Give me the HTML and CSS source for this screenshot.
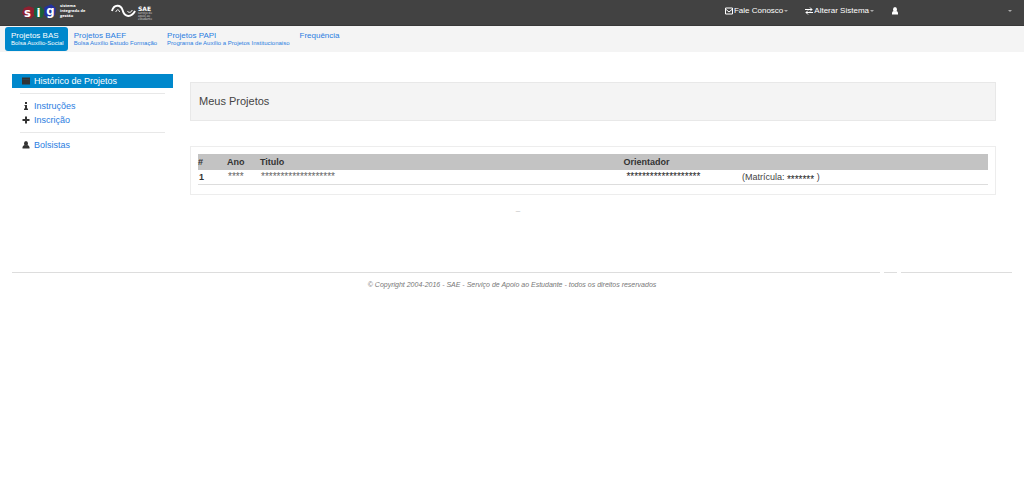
FILE: index.html
```
<!DOCTYPE html>
<html lang="pt-BR">
<head>
<meta charset="utf-8">
<meta name="viewport" content="width=device-width, initial-scale=1">
<title>SAE - Meus Projetos</title>
<link rel="stylesheet" href="styles.css">
</head>
<body>
<header class="topbar">
  <a class="brand" href="#">
    <svg class="sig-logo" viewBox="0 0 36 18" aria-label="sig" role="img">
      <path d="M2 5 7 3 12 5 13 12 9 16 3 14 0 10Z" fill="#8f2030"/>
      <path d="M13 5 19 3 23 8 21 15 15 15 12 11Z" fill="#17613a"/>
      <path d="M23 4 30 1 35 5 34 12 28 16 23 12Z" fill="#2432a0"/>
      <text class="sig-letter" x="2" y="14">s</text>
      <text class="sig-letter" x="15" y="14">i</text>
      <text class="sig-letter" x="25" y="12">g</text>
    </svg>
    <span class="brand-text">sistema<br>integrado de<br>gestão</span>
  </a>
  <a class="sae" href="#">
    <svg class="sae-logo" viewBox="0 0 27 14" fill="none" stroke="#fff" aria-hidden="true">
      <path d="M1 7C3 0 10 0 12 6 14 14 21 14 25 7" stroke-width="2"/>
      <path d="M5 8C6 5 8 5 9 8M17 7C18 9 21 9 22 6" stroke-width="1"/>
    </svg>
    <span class="sae-text"><b>SAE</b><small>serviço de<br>apoio ao<br>estudante</small></span>
  </a>
  <nav class="top-links" aria-label="Sistema">
    <button class="top-link" type="button">
      <svg class="icon" viewBox="0 0 16 16" fill="none" stroke="currentColor" stroke-width="2" aria-hidden="true"><path d="M1 2H15V14H1ZM1 4 8 10 15 4"/></svg>Fale Conosco<i class="caret"></i>
    </button>
    <button class="top-link" type="button">
      <svg class="icon" viewBox="0 0 16 16" fill="none" stroke="currentColor" stroke-width="2" aria-hidden="true"><path d="M0 5H14M10 1 14 5 10 9M16 11H2M6 7 2 11 6 15"/></svg>Alterar Sistema<i class="caret"></i>
    </button>
    <button class="top-link user" type="button" aria-label="Usuário">
      <svg class="icon" viewBox="0 0 16 16" fill="currentColor" aria-hidden="true"><ellipse cx="8" cy="5" rx="4" ry="5"/><path d="M2 15V12Q2 9 5 8Q8 11 11 8Q14 9 14 12V15Z"/></svg><i class="caret"></i>
    </button>
  </nav>
</header>
<nav class="tabs" aria-label="Projetos">
  <a class="tab active" href="#">Projetos BAS<small>Bolsa Auxílio-Social</small></a>
  <a class="tab" href="#">Projetos BAEF<small>Bolsa Auxílio Estudo Formação</small></a>
  <a class="tab" href="#">Projetos PAPI<small>Programa de Auxílio a Projetos Institucionaiso</small></a>
  <a class="tab" href="#">Frequência</a>
</nav>
<div class="layout">
  <nav class="side" aria-label="Menu">
    <a class="side-link current" href="#"><svg class="icon" viewBox="0 0 16 16" fill="currentColor" aria-hidden="true"><path d="M0 1H16V15H0Z"/><path d="M1 5H15" stroke="#24536b"/></svg>Histórico de Projetos</a>
    <hr>
    <a class="side-link" href="#"><svg class="icon" viewBox="0 0 16 16" fill="currentColor" aria-hidden="true"><path d="M6 0H10V4H6ZM5 6H10V13H12V16H4V13H6V8H5Z"/></svg>Instruções</a>
    <a class="side-link" href="#"><svg class="icon" viewBox="0 0 16 16" fill="currentColor" aria-hidden="true"><path d="M6 1H10V6H15V10H10V15H6V10H1V6H6Z"/></svg>Inscrição</a>
    <hr>
    <a class="side-link" href="#"><svg class="icon" viewBox="0 0 16 16" fill="currentColor" aria-hidden="true"><ellipse cx="8" cy="5" rx="4" ry="5"/><path d="M1 15V12Q2 9 5 8Q8 11 11 8Q14 9 15 12V15Z"/></svg>Bolsistas</a>
  </nav>
  <main class="main">
    <h1 class="title">Meus Projetos</h1>
    <section class="panel">
      <table class="projects">
        <colgroup><col class="c-num"><col class="c-year"><col class="c-title"><col class="c-adv"><col></colgroup>
        <thead><tr><th>#</th><th>Ano</th><th>Titulo</th><th colspan="2">Orientador</th></tr></thead>
        <tbody><tr><th scope="row">1</th><td class="mask">****</td><td class="mask">*******************</td><td class="mask strong">*******************</td><td>(Matrícula: <span class="mask strong">*******</span> )</td></tr></tbody>
      </table>
    </section>
    <p class="dash">–</p>
  </main>
</div>
<footer class="footer">
  <div class="rule"><span></span><span></span><span></span></div>
  <p>© Copyright 2004-2016 - SAE - Serviço de Apoio ao Estudante - todos os direitos reservados</p>
</footer>
</body>
</html>
```
FILE: styles.css
```
* { box-sizing: border-box; }
body {
  margin: 0;
  background: #fff;
  color: #444;
  font: 9px/14px "Liberation Sans", Arial, sans-serif;
}
a { color: #2a7de1; text-decoration: none; }
p { margin: 0; }
.icon { width: 8px; height: 8px; flex: none; }

.topbar {
  display: flex;
  height: 26px;
  padding: 0 12px 0 22px;
  background: #424242;
  border-bottom: 1px solid #383838;
}
.brand, .sae { display: flex; color: #fff; }
.brand { width: 89px; gap: 3px; padding-top: 3px; }
.sig-logo { width: 35px; height: 18px; overflow: visible; }
.sig-letter { font: bold 12px "DejaVu Sans", sans-serif; fill: #fff; }
.brand-text { font: bold 4px/5px "Open Sans", sans-serif; white-space: nowrap; }
.sae { gap: 1px; padding-top: 4px; }
.sae-logo { width: 26px; height: 14px; }
.sae-text { display: flex; flex-direction: column; padding-top: 2px; }
.sae-text b { font: bold 6px/6px "DejaVu Sans", sans-serif; }
.sae-text small { font: 3px/3px "Open Sans", sans-serif; color: #ddd; }
.top-links { display: flex; flex: 1; justify-content: flex-end; gap: 17px; }
.top-link {
  display: flex;
  align-items: center;
  height: 22px;
  padding: 0;
  gap: 1px;
  border: 0;
  background: none;
  color: #fff;
  font: 8px/12px "Liberation Sans", Arial, sans-serif;
}
.user { width: 121px; justify-content: space-between; }
.caret {
  border: 2px solid transparent;
  border-top-color: #aaa;
  border-bottom: 0;
}

.tabs {
  display: flex;
  height: 26px;
  padding: 1px 5px;
  background: #f4f4f4;
}
.tab {
  height: 24px;
  padding: 4px 4px 0 6px;
  border-radius: 3px;
  font-size: 8px;
  line-height: 9px;
  white-space: nowrap;
}
.tab small { display: block; font-size: 6px; line-height: 6px; }
.tab.active { background: #0088cc; color: #fff; }

.layout { display: flex; gap: 17px; padding: 22px 28px 0 12px; }
.side { width: 161px; }
.side-link { display: flex; align-items: center; gap: 4px; padding-left: 10px; }
.side-link .icon { color: #333; }
.side-link.current { background: #0088cc; color: #fff; }
.side hr { height: 1px; margin: 5px 8px; border: 0; background: #e8e8e8; }
.main { flex: 1; padding-top: 8px; }
.title {
  margin: 0 0 25px;
  padding: 11px 8px;
  border: 1px solid #e8e8e8;
  background: #f4f4f4;
  font-size: 11px;
  line-height: 15px;
  font-weight: normal;
}
.panel { padding: 7px 7px 9px; border: 1px solid #ededed; }
.projects { width: 100%; table-layout: fixed; border-collapse: collapse; }
.projects th, .projects td { padding: 0; text-align: left; line-height: 14px; white-space: nowrap; }
.projects thead th { height: 16px; }
.projects thead { background: #c3c3c3; color: #333; }
.projects tbody tr { border-bottom: 1px solid #ddd; }
.projects tbody th { padding-left: 1px; color: #333; }
.c-num { width: 29px; }
.c-year { width: 33px; }
.c-title { width: 46%; }
.c-adv { width: 15%; }
.projects .mask { padding-left: 1px; font-size: 10px; color: #666; }
.projects .strong { padding-left: 3px; color: #222; }
.projects span.strong { padding: 0; line-height: 0; vertical-align: sub; }
.dash { margin-top: 9px; padding: 0 200px 0 50px; text-align: center; color: #bbb; font-size: 8px; }

.footer { padding: 54px 12px 0; text-align: center; color: #777; font: italic 7px/12px "Liberation Sans", Arial, sans-serif; }
.rule { display: flex; gap: 4px; margin-bottom: 6px; }
.rule span { height: 1px; background: #ddd; }
.rule span:nth-child(1) { flex: 868; }
.rule span:nth-child(2) { flex: 13; }
.rule span:nth-child(3) { flex: 111; }
```
